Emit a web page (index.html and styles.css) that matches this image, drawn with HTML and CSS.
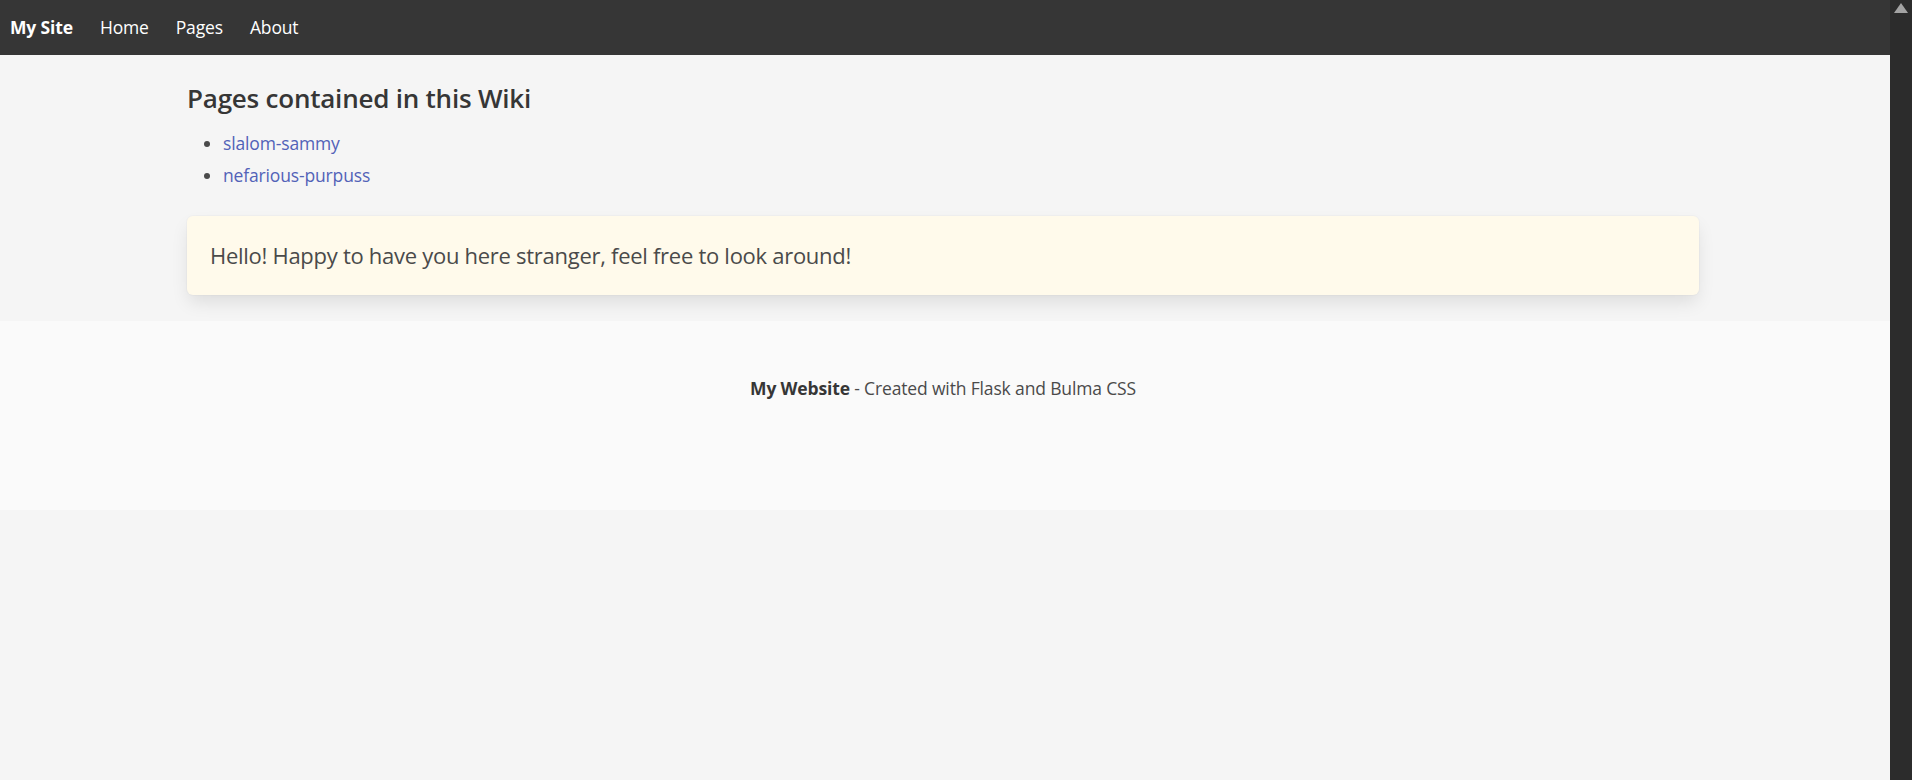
FILE: index.html
```html
<!DOCTYPE html>
<html lang="en">
<head>
<meta charset="utf-8">
<title>My Site</title>
<link rel="stylesheet" href="styles.css">
</head>
<body>
<div class="page">
  <nav class="navbar">
    <a class="navbar-item brand" href="#">My Site</a>
    <a class="navbar-item" href="#">Home</a>
    <a class="navbar-item" href="#">Pages</a>
    <a class="navbar-item" href="#">About</a>
  </nav>
  <section class="section">
    <div class="container">
      <h1 class="title">Pages contained in this Wiki</h1>
      <ul class="page-list">
        <li><a href="#">slalom-sammy</a></li>
        <li><a href="#">nefarious-purpuss</a></li>
      </ul>
      <div class="notice">Hello! Happy to have you here stranger, feel free to look around!</div>
    </div>
  </section>
  <footer class="footer">
    <p><strong>My Website</strong> - Created with Flask and Bulma CSS</p>
  </footer>
</div>
<div class="scrollbar"><span class="arrow"></span></div>
</body>
</html>
```
FILE: styles.css
```css
html, body {
  margin: 0;
  padding: 0;
  height: 100%;
}
body {
  display: flex;
  background: #f5f5f5;
  font-family: "Open Sans", "Noto Sans", sans-serif;
  color: #4a4a4a;
  overflow: hidden;
}
.page {
  flex: 1;
  min-width: 0;
}
.scrollbar {
  width: 22px;
  flex: none;
  background: #2c2c2c;
  display: flex;
  justify-content: center;
  padding-top: 3px;
  box-sizing: border-box;
}
.arrow {
  width: 0;
  height: 0;
  border-left: 7px solid transparent;
  border-right: 7px solid transparent;
  border-bottom: 10px solid #a3a3a3;
}
.navbar {
  height: 55px;
  background: #363636;
  display: flex;
  align-items: center;
}
.navbar-item {
  color: #ffffff;
  text-decoration: none;
  font-size: 17.5px;
  letter-spacing: -0.15px;
  padding: 0 13.5px;
  line-height: 55px;
}
.navbar-item.brand {
  font-weight: 700;
  padding-left: 10px;
}
.section {
  padding: 28px 0 26px;
}
.container {
  width: 1512px;
  margin: 0 auto;
  padding-right: 4px;
}
.title {
  margin: 0 0 17px 0;
  font-size: 26px;
  letter-spacing: -0.22px;
  line-height: 30px;
  font-weight: 600;
  color: #363636;
}
.page-list {
  margin: 0 0 27px 0;
  padding-left: 36px;
  font-size: 17.5px;
  letter-spacing: -0.15px;
  line-height: 27px;
}
.page-list li + li {
  margin-top: 4.5px;
}
.page-list li::marker {
  color: #4a4a4a;
}
.page-list a {
  color: #5262b8;
  text-decoration: none;
}
.notice {
  background: #fffaeb;
  border-radius: 6px;
  padding: 22.5px 23px;
  font-size: 22px;
  letter-spacing: -0.28px;
  line-height: 34px;
  color: #4a4a4a;
  box-shadow: 0 9px 18px -2px rgba(10, 10, 10, 0.1), 0 0 0 1px rgba(10, 10, 10, 0.02);
}
.footer {
  background: #fafafa;
  padding: 54px 27px 108px;
  text-align: center;
  font-size: 17.5px;
  letter-spacing: -0.15px;
  line-height: 27px;
}
.footer p {
  margin: 0 4px 0 0;
}
.footer strong {
  color: #363636;
  font-weight: 700;
}
```
